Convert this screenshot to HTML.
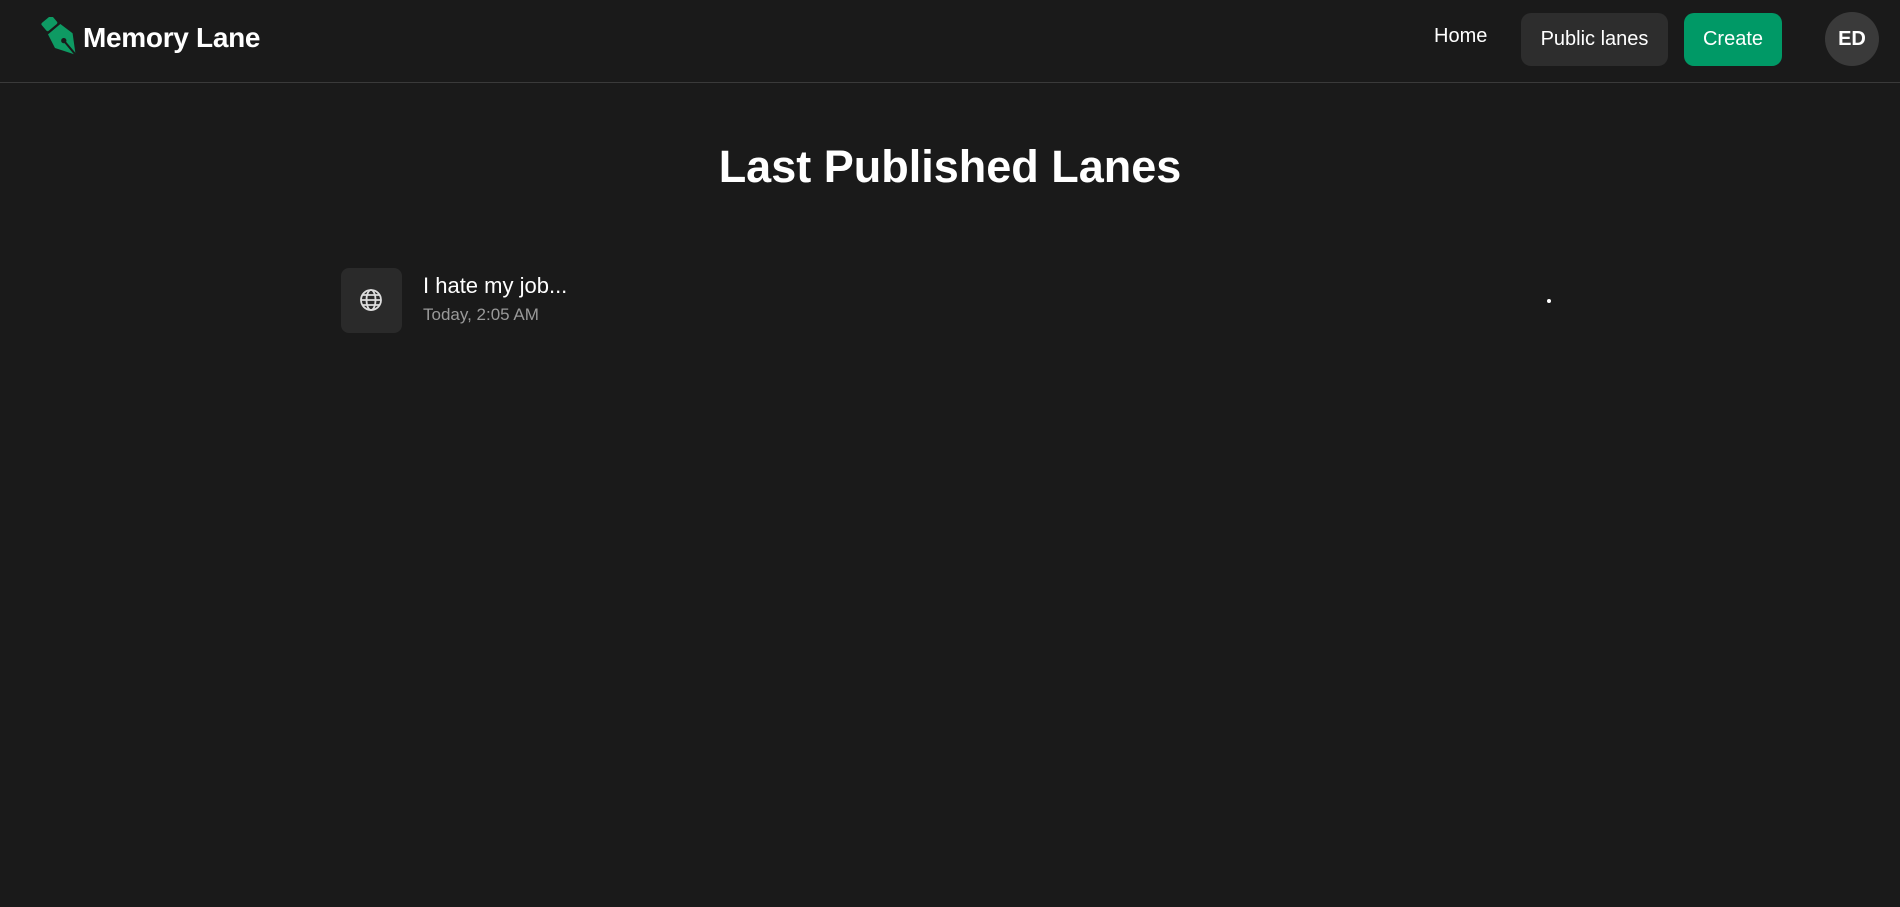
<!DOCTYPE html>
<html><head><style>
*{margin:0;padding:0;box-sizing:border-box}
body{width:1900px;height:907px;background:#1a1a1a;font-family:"Liberation Sans",sans-serif;color:#fff;position:relative;overflow:hidden}
.hdr{position:absolute;left:0;top:0;width:1900px;height:83px;border-bottom:1px solid #3a3a3a}
.abs{position:absolute}
.btn{position:absolute;top:13px;height:53px;border-radius:10px;font-size:20px;line-height:53px;text-align:center}
</style></head><body>
<div class="hdr">
<svg class="abs" style="left:40px;top:17px" width="40" height="42" viewBox="0 0 40 42">
<g transform="translate(9 6) scale(1.15) rotate(-40)">
<rect x="-6" y="-4" width="12" height="9" rx="1.5" fill="#0e9a63"/>
<path d="M-7 7 L7 7 L10 20 L0 36 L-10 20 Z" fill="#0e9a63"/>
<path d="M0 20 L0 36" stroke="#1a1a1a" stroke-width="1.8"/>
<circle cx="0" cy="20" r="2.3" fill="#1a1a1a"/>
</g>
</svg>
<div class="abs" style="left:83px;top:22px;font-size:28px;font-weight:bold;letter-spacing:-0.3px">Memory Lane</div>
<div class="abs" style="left:1434px;top:25px;font-size:20px">Home</div>
<div class="btn" style="left:1521px;width:147px;background:#2d2d2d">Public lanes</div>
<div class="btn" style="left:1684px;width:98px;background:#009966">Create</div>
<div class="abs" style="left:1825px;top:12px;width:54px;height:54px;border-radius:50%;background:#3a3a3a;font-size:20px;font-weight:bold;line-height:54px;text-align:center">ED</div>
</div>
<div class="abs" style="left:0;width:1900px;top:141px;text-align:center;font-size:45px;font-weight:bold">Last Published Lanes</div>
<div class="abs" style="left:341px;top:268px;width:61px;height:65px;border-radius:8px;background:#2a2a2a"></div>
<svg class="abs" style="left:359px;top:288px" width="24" height="24" viewBox="0 0 24 24" fill="none" stroke="#ddd" stroke-width="1.8">
<circle cx="12" cy="12" r="10"/><path d="M2 12h20M3.5 7h17M3.5 17h17"/><ellipse cx="12" cy="12" rx="4.5" ry="10"/></svg>
<div class="abs" style="left:423px;top:273px;font-size:22px">I hate my job...</div>
<div class="abs" style="left:423px;top:305px;font-size:17px;color:#999">Today, 2:05 AM</div>
<div class="abs" style="left:1547px;top:299px;width:4px;height:4px;background:#fff;border-radius:50%"></div>
</body></html>
